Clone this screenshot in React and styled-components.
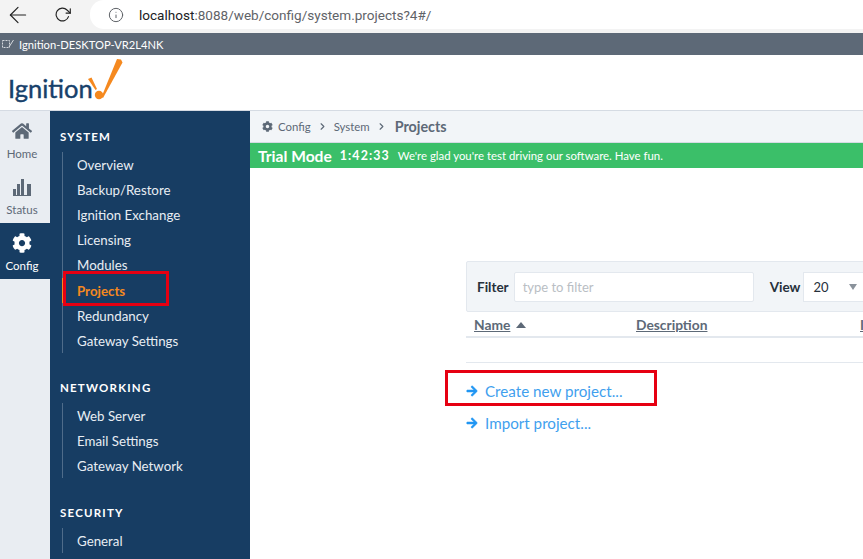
import React from "react";
import styled, { createGlobalStyle } from "styled-components";
import { FaHome, FaCog, FaArrowRight } from "react-icons/fa";
import { FiArrowLeft, FiRotateCw, FiInfo, FiChevronRight } from "react-icons/fi";

const GlobalStyle = createGlobalStyle`
  html, body {
    margin: 0;
    padding: 0;
    height: 100%;
    overflow: hidden;
    background: #fff;
    font-family: "Lato", "Noto Sans", sans-serif;
  }
`;

const Page = styled.div`
  width: 863px;
  height: 559px;
  display: flex;
  flex-direction: column;
  overflow: hidden;
`;

const Browser = styled.div`
  height: 33px;
  background: #f3f3f3;
  display: flex;
  align-items: flex-start;
  flex-shrink: 0;
`;

const BrowserButton = styled.div`
  width: ${(p) => p.$width}px;
  height: 29px;
  display: flex;
  align-items: center;
  justify-content: center;
  color: #222;
`;

const Address = styled.div`
  flex: 1;
  height: 29px;
  margin-left: 2px;
  background: #fff;
  border-radius: 14px 0 0 14px;
  display: flex;
  align-items: center;
  padding-left: 18px;
  font-family: "Roboto", sans-serif;
  font-size: 13.55px;
  color: #5f6368;
`;

const Host = styled.span`
  color: #202124;
  margin-left: 15px;
`;

const TitleBar = styled.div`
  height: 22px;
  background: #5d6977;
  color: #fff;
  display: flex;
  align-items: center;
  gap: 5px;
  padding-left: 2px;
  font-size: 11.2px;
  flex-shrink: 0;
`;

const Brand = styled.div`
  height: 52px;
  background: #fff;
  border-bottom: 1px solid #d5dbe3;
  padding: 3px 0 0 8px;
  display: flex;
  align-items: flex-start;
  flex-shrink: 0;
`;

const BrandName = styled.span`
  font-size: 25.5px;
  line-height: 38px;
  margin-top: 11px;
  color: #17416b;
  -webkit-text-stroke: 0.4px #17416b;
`;

const BrandMark = styled.svg`
  margin-left: -5px;
`;

const Main = styled.div`
  flex: 1;
  display: flex;
  min-height: 0;
`;

const Rail = styled.div`
  width: 50px;
  background: #e9edf2;
  flex-shrink: 0;
`;

const RailItem = styled.div`
  height: 56px;
  box-sizing: border-box;
  padding: 10px 6px 0 0;
  display: flex;
  flex-direction: column;
  align-items: center;
  gap: 6px;
  font-size: 11.5px;
  line-height: 14px;
  color: ${(p) => (p.$active ? "#fff" : "#5d6977")};
  background: ${(p) => (p.$active ? "#173d63" : "transparent")};
`;

const RailIcon = styled.div`
  height: 20px;
  display: flex;
  align-items: center;
`;

const Nav = styled.div`
  width: 200px;
  background: #173d63;
  flex-shrink: 0;
  padding: 19px 0 0 10px;
  box-sizing: border-box;
  overflow: hidden;
`;

const NavHeading = styled.div`
  font-size: 11.5px;
  font-weight: 700;
  letter-spacing: 1.2px;
  color: #fff;
  line-height: 14px;
  margin-bottom: 7.7px;
`;

const NavList = styled.div`
  margin-left: 2px;
  border-left: 1px solid #4f6c8a;
  margin-bottom: 27.8px;
`;

const NavItem = styled.div`
  height: 25.2px;
  line-height: 26px;
  padding-left: 14px;
  font-size: 13.3px;
  font-weight: ${(p) => (p.$active ? 700 : 400)};
  color: ${(p) => (p.$active ? "#f5891f" : "#e8edf3")};
  margin-left: ${(p) => (p.$active ? "-1px" : "0")};
  border-left: ${(p) => (p.$active ? "1px solid #f5891f" : "none")};
`;

const Content = styled.div`
  flex: 1;
  min-width: 0;
  display: flex;
  flex-direction: column;
`;

const Crumbs = styled.div`
  height: 31px;
  background: #f2f5f8;
  border-bottom: 1px solid #d5dbe3;
  display: flex;
  align-items: center;
  padding-left: 12px;
  gap: 6px;
  font-size: 11.4px;
  color: #5d6977;
  flex-shrink: 0;
  svg:first-child {
    margin-right: -1px;
  }
`;

const CrumbCurrent = styled.span`
  font-size: 14.3px;
  font-weight: 700;
  margin-left: 2px;
`;

const Trial = styled.div`
  height: 25px;
  background: #3bbf69;
  color: #fff;
  display: flex;
  align-items: center;
  padding-left: 8px;
  font-size: 11.4px;
  flex-shrink: 0;
`;

const TrialTitle = styled.strong`
  font-size: 15.6px;
  margin-right: 8px;
`;

const TrialClock = styled.strong`
  font-size: 12.4px;
  letter-spacing: 1.1px;
  margin-right: 8px;
`;

const Body = styled.div`
  flex: 1;
  padding: 93px 0 0 216px;
  overflow: hidden;
`;

const Panel = styled.div`
  width: 420px;
  height: 51px;
  background: #f2f5f8;
  border: 1px solid #e3e8ee;
  border-radius: 2px 0 0 2px;
  display: flex;
  align-items: center;
  padding-left: 10px;
  box-sizing: border-box;
  font-size: 13.5px;
  font-weight: 700;
  color: #26303b;
`;

const FilterInput = styled.div`
  width: 240px;
  height: 30px;
  margin: 0 16px 0 5px;
  background: #fff;
  border: 1px solid #e3e8ee;
  border-radius: 2px;
  box-sizing: border-box;
  padding-left: 8px;
  line-height: 28px;
  font-size: 13px;
  font-weight: 400;
  color: #b9bec4;
`;

const ViewSelect = styled.div`
  flex: 1;
  height: 30px;
  margin-left: 3px;
  background: #fff;
  border: 1px solid #e3e8ee;
  border-right: none;
  box-sizing: border-box;
  padding: 0 28px 0 9px;
  display: flex;
  align-items: center;
  justify-content: space-between;
  font-size: 13px;
  font-weight: 400;
  color: #26303b;
`;

const Caret = styled.span`
  width: 0;
  height: 0;
  border-left: 4px solid transparent;
  border-right: 4px solid transparent;
  border-top: 6px solid #8a929b;
`;

const TableHead = styled.div`
  width: 397px;
  height: 24px;
  border-bottom: 2px solid #e3e8ee;
  display: flex;
  align-items: center;
  font-size: 13.8px;
  font-weight: 700;
  color: #5d6977;
  padding-left: 8px;
  overflow: hidden;
`;

const HeadCell = styled.span`
  width: ${(p) => p.$width}px;
  flex-shrink: 0;
  white-space: nowrap;
`;

const HeadLabel = styled.span`
  text-decoration: underline;
`;

const SortArrow = styled.span`
  display: inline-block;
  vertical-align: 2px;
  margin-left: 6px;
  border-left: 5px solid transparent;
  border-right: 5px solid transparent;
  border-bottom: 6px solid #5d6977;
`;

const TableEnd = styled.div`
  width: 397px;
  height: 24px;
  border-bottom: 1px solid #e3e8ee;
`;

const Actions = styled.div`
  margin-top: 17px;
  display: flex;
  flex-direction: column;
  gap: 10px;
`;

const Action = styled.div`
  height: 22px;
  display: flex;
  align-items: center;
  gap: 7px;
  font-size: 15.2px;
  color: #3f9fee;
  svg {
    color: #2196f3;
    stroke: currentColor;
    stroke-width: 25;
  }
`;

const Highlight = styled.div`
  position: absolute;
  left: ${(p) => p.$left}px;
  top: ${(p) => p.$top}px;
  width: ${(p) => p.$width}px;
  height: ${(p) => p.$height}px;
  border: 3px solid #e60012;
  box-sizing: border-box;
  pointer-events: none;
`;

const StatusIcon = () => (
  <svg width="18" height="17" viewBox="0 0 18 17" fill="currentColor">
    <rect x="0" y="10" width="3" height="6" />
    <rect x="4" y="5" width="3" height="11" />
    <rect x="8" y="0" width="3" height="16" />
    <rect x="14" y="5" width="4" height="11" />
    <rect x="0" y="16" width="18" height="1" />
  </svg>
);

const SiteIcon = () => (
  <svg width="12" height="10" viewBox="0 0 12 10" fill="none" stroke="#d5d9de" strokeWidth="1">
    <rect x="0.5" y="1.5" width="7" height="7" strokeDasharray="2 1" />
    <path d="M7 8 L11.5 1" />
  </svg>
);

const Logo = () => (
  <BrandMark width="36" height="46" viewBox="0 0 36 46">
    <path d="M29 1 L33 1.5 L34.5 4.5 L15 40 L13.5 39 Z" fill="#f5891f" />
    <circle cx="11" cy="37" r="4.2" fill="#f5891f" />
    <path d="M0 21 L3.5 19.5 L9 31 L7.5 32 Z" fill="#f5891f" />
  </BrandMark>
);

const sections = [
  { title: "SYSTEM", items: ["Overview", "Backup/Restore", "Ignition Exchange", "Licensing", "Modules", "Projects", "Redundancy", "Gateway Settings"] },
  { title: "NETWORKING", items: ["Web Server", "Email Settings", "Gateway Network"] },
  { title: "SECURITY", items: ["General"] },
];

export default function App() {
  return (
    <Page>
      <GlobalStyle />
      <Browser>
        <BrowserButton $width={36}><FiArrowLeft size={26} strokeWidth={1.1} /></BrowserButton>
        <BrowserButton $width={52}><FiRotateCw size={17} strokeWidth={1.6} /></BrowserButton>
        <Address>
          <FiInfo size={16} strokeWidth={1.5} />
          <Host>localhost</Host>:8088/web/config/system.projects?4#/
        </Address>
      </Browser>
      <TitleBar><SiteIcon />Ignition-DESKTOP-VR2L4NK</TitleBar>
      <Brand>
        <BrandName>Ignition</BrandName>
        <Logo />
      </Brand>
      <Main>
        <Rail>
          <RailItem><RailIcon><FaHome size={20} /></RailIcon>Home</RailItem>
          <RailItem><RailIcon><StatusIcon /></RailIcon>Status</RailItem>
          <RailItem $active><RailIcon><FaCog size={20} /></RailIcon>Config</RailItem>
        </Rail>
        <Nav>
          {sections.map((section) => (
            <div key={section.title}>
              <NavHeading>{section.title}</NavHeading>
              <NavList>
                {section.items.map((item) => (
                  <NavItem key={item} $active={item === "Projects"}>{item}</NavItem>
                ))}
              </NavList>
            </div>
          ))}
        </Nav>
        <Content>
          <Crumbs>
            <FaCog size={11} />
            <span>Config</span>
            <FiChevronRight size={11} strokeWidth={2.5} />
            <span>System</span>
            <FiChevronRight size={11} strokeWidth={2.5} />
            <CrumbCurrent>Projects</CrumbCurrent>
          </Crumbs>
          <Trial>
            <TrialTitle>Trial Mode</TrialTitle>
            <TrialClock>1:42:33</TrialClock>
            We're glad you're test driving our software. Have fun.
          </Trial>
          <Body>
            <Panel>
              Filter
              <FilterInput>type to filter</FilterInput>
              View
              <ViewSelect>20<Caret /></ViewSelect>
            </Panel>
            <TableHead>
              <HeadCell $width={162}><HeadLabel>Name</HeadLabel><SortArrow /></HeadCell>
              <HeadCell $width={224}><HeadLabel>Description</HeadLabel></HeadCell>
              <HeadCell $width={3}><HeadLabel>I</HeadLabel></HeadCell>
            </TableHead>
            <TableEnd />
            <Actions>
              <Action><FaArrowRight size={12} />Create new project...</Action>
              <Action><FaArrowRight size={12} />Import project...</Action>
            </Actions>
          </Body>
        </Content>
      </Main>
      <Highlight $left={63} $top={271} $width={106} $height={35} />
      <Highlight $left={445} $top={370} $width={212} $height={36} />
    </Page>
  );
}
